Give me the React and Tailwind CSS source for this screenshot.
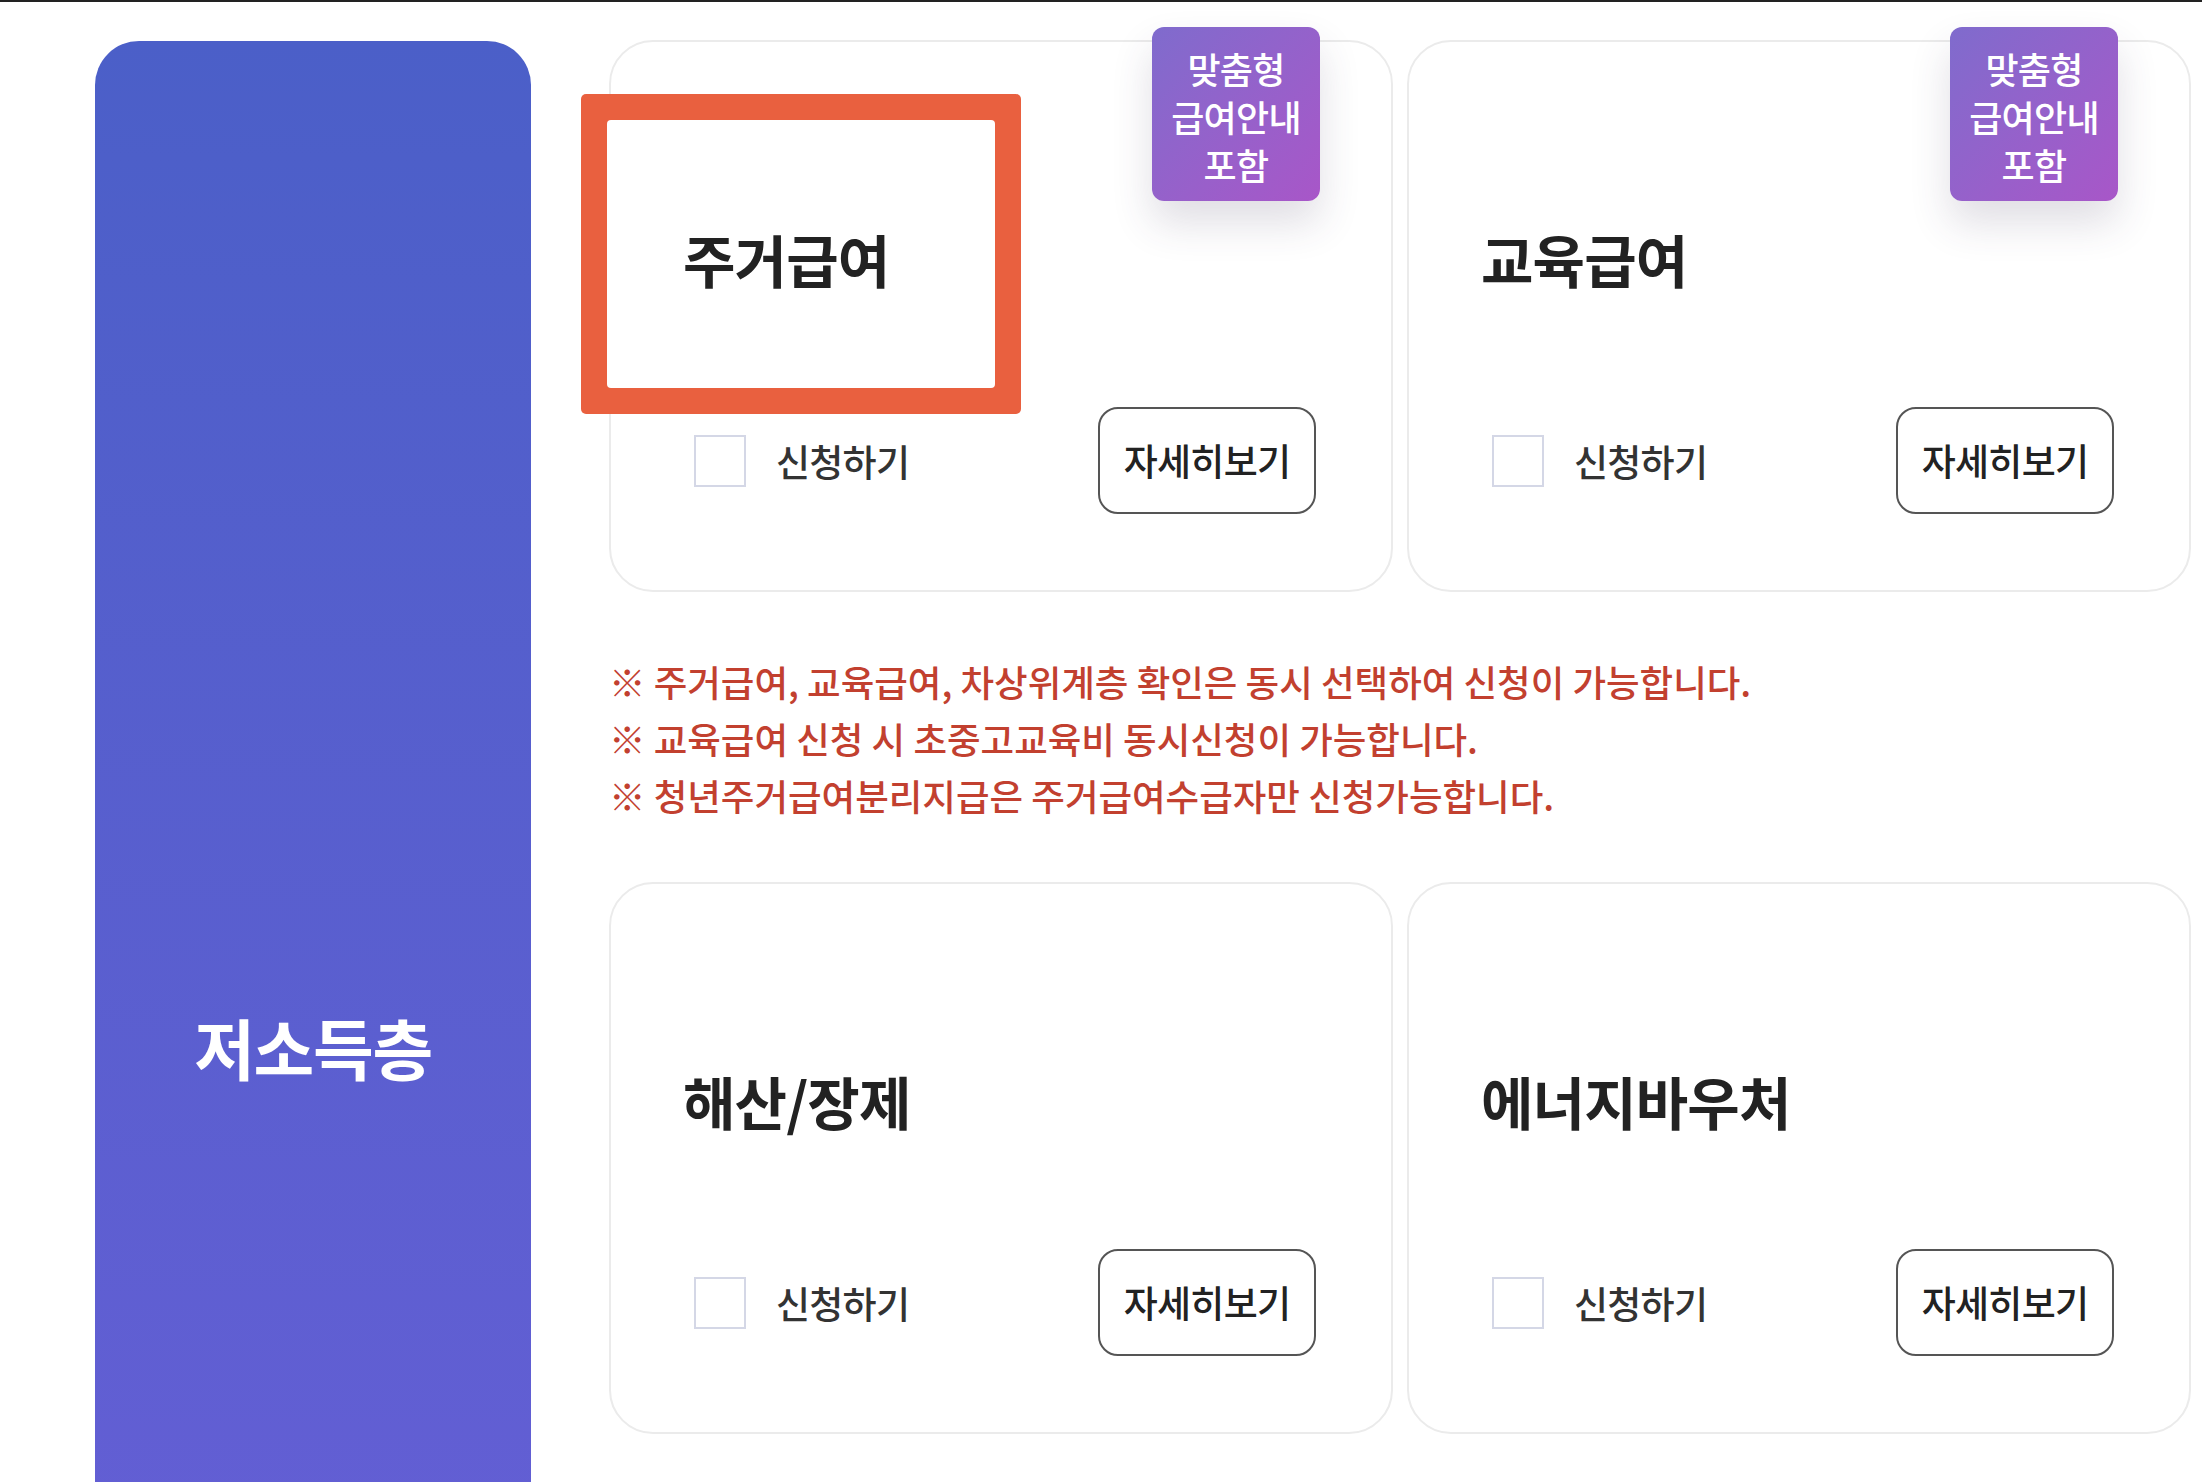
import React from "react";

const font = "font-['Noto_Sans_CJK_KR','Noto_Sans',sans-serif]";

const notes = [
  "※ 주거급여, 교육급여, 차상위계층 확인은 동시 선택하여 신청이 가능합니다.",
  "※ 교육급여 신청 시 초중고교육비 동시신청이 가능합니다.",
  "※ 청년주거급여분리지급은 주거급여수급자만 신청가능합니다.",
];

function Badge() {
  return (
    <div className="absolute right-[71px] top-[-15px] flex h-[174px] w-[168px] flex-col items-center rounded-[12px] bg-gradient-to-br from-[#7f6bcd] to-[#a856c8] pt-[17px] text-[36px] leading-[48px] font-medium tracking-[-0.02em] text-white shadow-[0_22px_40px_rgba(60,50,90,0.16)]">
      <span>맞춤형</span>
      <span>급여안내</span>
      <span>포함</span>
    </div>
  );
}

function Highlight() {
  return (
    <div className="absolute left-[-30px] top-[52px] h-[320px] w-[440px] rounded-[5px] bg-[#e9603f] p-[26px]">
      <div className="h-full w-full rounded-[4px] bg-white" />
    </div>
  );
}

function BenefitCard({ title, badge, highlight }) {
  return (
    <div className="relative flex h-[552px] flex-col rounded-[44px] border-2 border-[#ebebeb] bg-white">
      {highlight && <Highlight />}
      {badge && <Badge />}
      <h3 className="relative pl-[72px] pt-[184px] text-[57px] leading-[64px] font-bold tracking-[-0.015em] text-[#222]">
        {title}
      </h3>
      <div className="relative mt-[117px] flex items-center justify-between pl-[83px] pr-[75px]">
        <label className="flex items-center gap-[30px]">
          <span className="h-[52px] w-[52px] border-2 border-[#d4d7e6] bg-white" />
          <span className="text-[37px] leading-[48px] font-medium tracking-[-0.02em] text-[#333]">신청하기</span>
        </label>
        <button className="flex h-[107px] w-[218px] items-center justify-center rounded-[20px] border-2 border-[#555] bg-white text-[37px] font-medium tracking-[-0.02em] text-[#222]">
          자세히보기
        </button>
      </div>
    </div>
  );
}

export default function App() {
  return (
    <div className={`h-[1482px] w-[2202px] overflow-hidden border-t-2 border-[#222] bg-white ${font}`}>
      <div className="flex items-start gap-[78px] pl-[95px] pt-[38px]">
        <aside className="mt-[1px] flex h-[2010px] w-[436px] shrink-0 items-center justify-center rounded-t-[44px] bg-gradient-to-b from-[#4b5fc8] to-[#6a5ed8]">
          <h2 className="text-[66px] leading-[76px] font-bold tracking-[-0.02em] text-white">저소득층</h2>
        </aside>

        <section className="w-[1582px]">
          <div className="grid grid-cols-2 gap-x-[14px]">
            <BenefitCard title="주거급여" badge highlight />
            <BenefitCard title="교육급여" badge />
          </div>

          <div className="mt-[61px] mb-[58px] text-[36.5px] leading-[57px] font-medium text-[#c2402f]">
            {notes.map((n) => (
              <p key={n}>{n}</p>
            ))}
          </div>

          <div className="grid grid-cols-2 gap-x-[14px]">
            <BenefitCard title="해산/장제" />
            <BenefitCard title="에너지바우처" />
          </div>
        </section>
      </div>
    </div>
  );
}
